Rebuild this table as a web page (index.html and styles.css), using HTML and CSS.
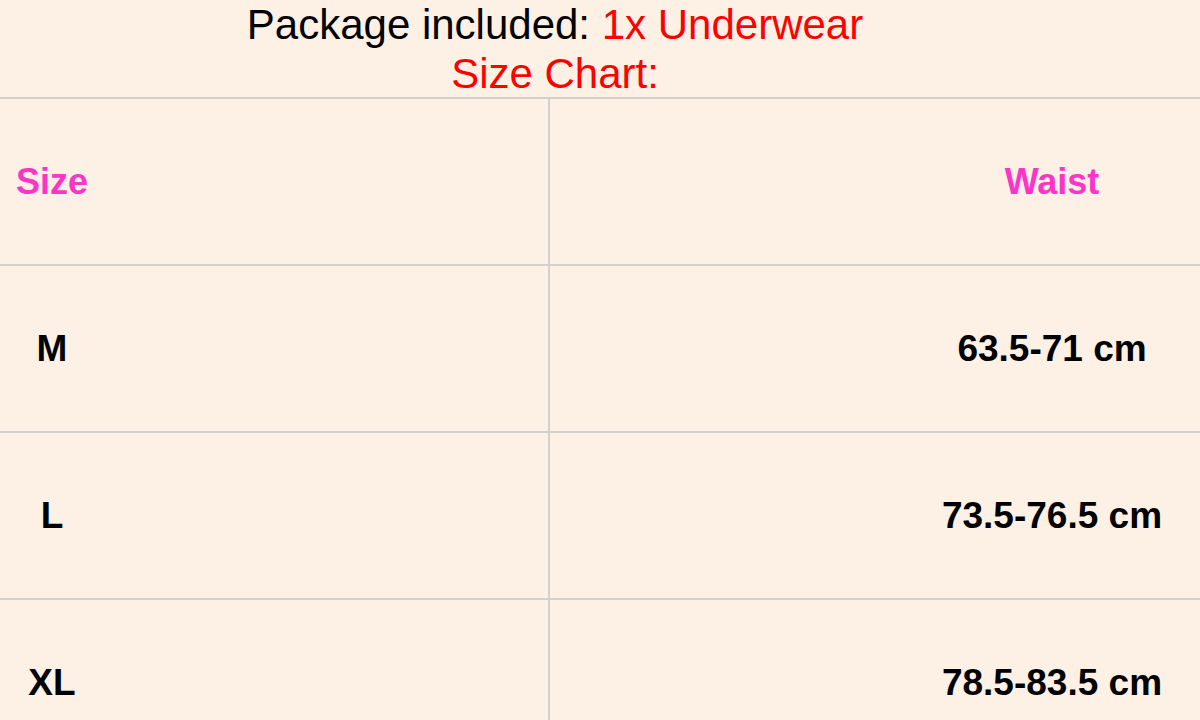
FILE: index.html
```html
<!DOCTYPE html>
<html>
<head>
<meta charset="utf-8">
<link rel="stylesheet" href="styles.css">
</head>
<body>
<div class="page">
  <header class="intro">
    <div class="line">Package included: <span class="red">1x Underwear</span></div>
    <div class="line red">Size Chart:</div>
  </header>
  <div class="chart">
    <div class="row head">
      <div class="cell c1"><span class="lbl">Size</span></div>
      <div class="cell c2"><span class="lbl">Waist</span></div>
    </div>
    <div class="row">
      <div class="cell c1"><span class="lbl">M</span></div>
      <div class="cell c2"><span class="lbl">63.5-71 cm</span></div>
    </div>
    <div class="row">
      <div class="cell c1"><span class="lbl">L</span></div>
      <div class="cell c2"><span class="lbl">73.5-76.5 cm</span></div>
    </div>
    <div class="row">
      <div class="cell c1"><span class="lbl">XL</span></div>
      <div class="cell c2"><span class="lbl">78.5-83.5 cm</span></div>
    </div>
  </div>
</div>
</body>
</html>
```
FILE: styles.css
```css
html, body {
  margin: 0;
  padding: 0;
  background: #fdf0e4;
}
body {
  width: 1200px;
  height: 720px;
  overflow: hidden;
  font-family: "Liberation Sans", Arial, sans-serif;
}
.page {
  display: flex;
  flex-direction: column;
}
.intro {
  width: 1110px;
  text-align: center;
  font-size: 42px;
  line-height: 49px;
  color: #000;
  padding-top: 0;
  height: 97px;
}
.red {
  color: #ff0000;
}
.chart {
  border-top: 2px solid #d4d1cd;
}
.row {
  display: flex;
  height: 165px;
  border-bottom: 2px solid #d4d1cd;
}
.cell {
  display: flex;
  align-items: center;
  font-weight: bold;
  font-size: 37px;
  color: #000;
}
.c1 {
  width: 548px;
  border-right: 2px solid #d4d1cd;
  justify-content: flex-start;
}
.c2 {
  flex: 1;
  justify-content: flex-end;
}
.c1 .lbl {
  width: 104px;
  text-align: center;
}
.c2 .lbl {
  width: 296px;
  text-align: center;
}
.head .cell {
  color: #fb35c9;
  font-size: 36px;
}
```
